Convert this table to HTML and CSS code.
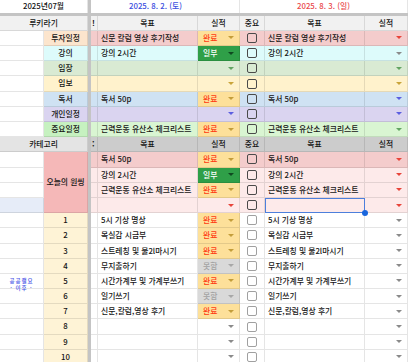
FILE: index.html
```html
<!DOCTYPE html>
<html lang="ko">
<head>
<meta charset="utf-8">
<title>루키라기 시트</title>
<link rel="stylesheet" href="styles.css">
</head>
<body>
<div class="sheet">
  <div class="vdiv"></div>
  <div class="hband"></div>

  <!-- row 1: dates -->
  <div class="c ctr top ab">2025년07월</div>
  <div class="c ctr top d1">2025. 8. 2. (토)</div>
  <div class="c ctr top d2">2025. 8. 3. (일)</div>

  <!-- header row -->
  <div class="c ctr h1 hr ab">루키라기</div>
  <div class="c h1 hr cut">!</div>
  <div class="c ctr h1 hr">목표</div>
  <div class="c ctr h1 hr">실적</div>
  <div class="c ctr h1 hr">중요</div>
  <div class="c ctr h1 hr">목표</div>
  <div class="c ctr h1 hr">실적</div>

  <!-- k0 투자일정 -->
  <div class="c colA"></div>
  <div class="c ctr pe">투자일정</div>
  <div class="c pk"></div>
  <div class="c pk">신문 칼럼 영상 후기작성</div>
  <div class="c dd ok">완료<i class="ar"></i></div>
  <div class="c cbx pk"><span class="cb"></span></div>
  <div class="c pk">신문 칼럼 영상 후기작성</div>
  <div class="c dd pk"><i class="ar a-r"></i></div>

  <!-- k1 강의 -->
  <div class="c colA"></div>
  <div class="c ctr cy">강의</div>
  <div class="c cy"></div>
  <div class="c cy">강의 2시간</div>
  <div class="c dd pt">일부<i class="ar"></i></div>
  <div class="c cbx cy"><span class="cb"></span></div>
  <div class="c cy">강의 2시간</div>
  <div class="c dd cy"><i class="ar a-k"></i></div>

  <!-- k2 임장 -->
  <div class="c colA"></div>
  <div class="c ctr gr">임장</div>
  <div class="c gr"></div>
  <div class="c gr"></div>
  <div class="c dd gr"><i class="ar a-g"></i></div>
  <div class="c cbx gr"><span class="cb"></span></div>
  <div class="c gr"></div>
  <div class="c dd gr"><i class="ar a-g"></i></div>

  <!-- k3 임보 -->
  <div class="c colA"></div>
  <div class="c ctr ye">임보</div>
  <div class="c ye"></div>
  <div class="c ye"></div>
  <div class="c dd ye"><i class="ar a-y"></i></div>
  <div class="c cbx ye"><span class="cb"></span></div>
  <div class="c ye"></div>
  <div class="c dd ye"><i class="ar a-y"></i></div>

  <!-- k4 독서 -->
  <div class="c colA"></div>
  <div class="c ctr bl">독서</div>
  <div class="c bl"></div>
  <div class="c bl">독서 50p</div>
  <div class="c dd ok">완료<i class="ar"></i></div>
  <div class="c cbx bl"><span class="cb"></span></div>
  <div class="c bl">독서 50p</div>
  <div class="c dd bl"><i class="ar a-b"></i></div>

  <!-- k5 개인일정 -->
  <div class="c colA"></div>
  <div class="c ctr pu">개인일정</div>
  <div class="c pu"></div>
  <div class="c pu"></div>
  <div class="c dd pu"><i class="ar a-b"></i></div>
  <div class="c cbx pu"><span class="cb"></span></div>
  <div class="c pu"></div>
  <div class="c dd pu"><i class="ar a-b"></i></div>

  <!-- k6 중요일정 -->
  <div class="c colA"></div>
  <div class="c ctr lg2">중요일정</div>
  <div class="c lg"></div>
  <div class="c lg">근력운동 유산소 체크리스트</div>
  <div class="c dd ok">완료<i class="ar"></i></div>
  <div class="c cbx lg"><span class="cb"></span></div>
  <div class="c lg">근력운동 유산소 체크리스트</div>
  <div class="c dd lg"><i class="ar a-g"></i></div>

  <!-- k7 카테고리 header -->
  <div class="c ctr h2a ab">카테고리</div>
  <div class="c h2 cut">:</div>
  <div class="c ctr h2">목표</div>
  <div class="c ctr h2">실적</div>
  <div class="c ctr h2">중요</div>
  <div class="c ctr h2">목표</div>
  <div class="c ctr h2">실적</div>

  <!-- k8 -->
  <div class="c colA"></div>
  <div class="c rp one">오늘의 원씽</div>
  <div class="c pk"></div>
  <div class="c pk">독서 50p</div>
  <div class="c dd ok">완료<i class="ar"></i></div>
  <div class="c cbx pk"><span class="cb"></span></div>
  <div class="c pk">독서 50p</div>
  <div class="c dd pk"><i class="ar a-r"></i></div>

  <!-- k9 -->
  <div class="c colA"></div>
  <div class="c lp"></div>
  <div class="c lp">강의 2시간</div>
  <div class="c dd pt">일부<i class="ar"></i></div>
  <div class="c cbx lp"><span class="cb"></span></div>
  <div class="c lp">강의 2시간</div>
  <div class="c dd lp"><i class="ar a-r"></i></div>

  <!-- k10 -->
  <div class="c colA"></div>
  <div class="c lp"></div>
  <div class="c lp">근력운동 유산소 체크리스트</div>
  <div class="c dd ok">완료<i class="ar"></i></div>
  <div class="c cbx lp"><span class="cb"></span></div>
  <div class="c lp">근력운동 유산소 체크리스트</div>
  <div class="c dd lp"><i class="ar a-r"></i></div>

  <!-- k11 -->
  <div class="c colA sb"></div>
  <div class="c lp"></div>
  <div class="c lp"></div>
  <div class="c dd lp"><i class="ar a-r"></i></div>
  <div class="c cbx lp"><span class="cb"></span></div>
  <div class="c lp sel"></div>
  <div class="c dd lp"><i class="ar a-r"></i></div>

  <!-- k12 -->
  <div class="c colA"></div>
  <div class="c ctr ny">1</div>
  <div class="c"></div>
  <div class="c">5시 기상 명상</div>
  <div class="c dd ok">완료<i class="ar"></i></div>
  <div class="c cbx"><span class="cb lt"></span></div>
  <div class="c">5시 기상 명상</div>
  <div class="c dd"><i class="ar a-k"></i></div>

  <!-- k13 -->
  <div class="c colA"></div>
  <div class="c ctr ny">2</div>
  <div class="c"></div>
  <div class="c">목실감 시금부</div>
  <div class="c dd ok">완료<i class="ar"></i></div>
  <div class="c cbx"><span class="cb lt"></span></div>
  <div class="c">목실감 시금부</div>
  <div class="c dd"><i class="ar a-k"></i></div>

  <!-- k14 -->
  <div class="c colA"></div>
  <div class="c ctr ny">3</div>
  <div class="c"></div>
  <div class="c">스트레칭 및 물2l마시기</div>
  <div class="c dd ok">완료<i class="ar"></i></div>
  <div class="c cbx"><span class="cb lt"></span></div>
  <div class="c">스트레칭 및 물2l마시기</div>
  <div class="c dd"><i class="ar a-k"></i></div>

  <!-- k15 -->
  <div class="c colA"></div>
  <div class="c ctr ny">4</div>
  <div class="c"></div>
  <div class="c">무지출하기</div>
  <div class="c dd no">못함<i class="ar"></i></div>
  <div class="c cbx"><span class="cb lt"></span></div>
  <div class="c">무지출하기</div>
  <div class="c dd"><i class="ar a-k"></i></div>

  <!-- k16 -->
  <div class="c colA note">공공캘요<br>· 이후 ·</div>
  <div class="c ctr ny">5</div>
  <div class="c"></div>
  <div class="c">시간가계부 및 가계부쓰기</div>
  <div class="c dd ok">완료<i class="ar"></i></div>
  <div class="c cbx"><span class="cb lt"></span></div>
  <div class="c">시간가계부 및 가계부쓰기</div>
  <div class="c dd"><i class="ar a-k"></i></div>

  <!-- k17 -->
  <div class="c colA"></div>
  <div class="c ctr ny">6</div>
  <div class="c"></div>
  <div class="c">일기쓰기</div>
  <div class="c dd no">못함<i class="ar"></i></div>
  <div class="c cbx"><span class="cb lt"></span></div>
  <div class="c">일기쓰기</div>
  <div class="c dd"><i class="ar a-k"></i></div>

  <!-- k18 -->
  <div class="c colA"></div>
  <div class="c ctr ny">7</div>
  <div class="c"></div>
  <div class="c">신문,칼럼,영상 후기</div>
  <div class="c dd ok">완료<i class="ar"></i></div>
  <div class="c cbx"><span class="cb lt"></span></div>
  <div class="c">신문,칼럼,영상 후기</div>
  <div class="c dd"><i class="ar a-k"></i></div>

  <!-- k19 -->
  <div class="c colA"></div>
  <div class="c ctr ny">8</div>
  <div class="c"></div>
  <div class="c"></div>
  <div class="c dd"><i class="ar a-k"></i></div>
  <div class="c cbx"><span class="cb lt"></span></div>
  <div class="c"></div>
  <div class="c dd"><i class="ar a-k"></i></div>

  <!-- k20 -->
  <div class="c colA"></div>
  <div class="c ctr ny">9</div>
  <div class="c"></div>
  <div class="c"></div>
  <div class="c dd"><i class="ar a-k"></i></div>
  <div class="c cbx"><span class="cb lt"></span></div>
  <div class="c"></div>
  <div class="c dd"><i class="ar a-k"></i></div>

  <!-- k21 -->
  <div class="c colA"></div>
  <div class="c ctr ny">10</div>
  <div class="c"></div>
  <div class="c"></div>
  <div class="c dd"><i class="ar a-k"></i></div>
  <div class="c cbx"><span class="cb lt"></span></div>
  <div class="c"></div>
  <div class="c dd"><i class="ar a-k"></i></div>
</div>
</body>
</html>
```

FILE: styles.css
```css
html, body {
  margin: 0;
  padding: 0;
  background: #fff;
}
body {
  width: 408px;
  height: 362px;
  overflow: hidden;
  font-family: "Noto Sans CJK KR", "Noto Sans", sans-serif;
  font-size: 7.8px;
  font-weight: 500;
  color: #141414;
}
.sheet {
  width: 408px;
  display: grid;
  grid-template-columns: 44px 44px 3px 7px 100px 42px 25px 100px 43px;
  grid-template-rows: 12.5px 3px 15.4px repeat(22, 15.2px);
}
.vdiv {
  grid-column: 3 / 4;
  grid-row: 1 / 26;
  background: #c4c4c4;
}
.hband {
  grid-column: 1 / 10;
  grid-row: 2 / 3;
  background: #c4c4c4;
}
.c {
  box-sizing: border-box;
  border-right: 1px solid rgba(0, 0, 0, 0.1);
  border-bottom: 1px solid rgba(0, 0, 0, 0.1);
  display: block;
  padding: 0 3px;
  overflow: hidden;
  white-space: nowrap;
  line-height: 14.2px;
  min-width: 0;
  text-align: left;
}
.ctr { text-align: center; padding: 0; }
.colA { grid-column: 1 / 2; }
.ab { grid-column: 1 / 3; }
.top { border-bottom: none; line-height: 12.5px; }
.hr { line-height: 14.4px; }
.d1 { grid-column: 4 / 7; color: #3b4ee0; padding-right: 19px; }
.d2 { grid-column: 7 / 10; color: #ea4a4c; }

.cut { padding: 0 0 0 1px; font-weight: 700; }

.h1 { background: #f1f1f1; }
.h2 { background: #cccccc; }
.h2a { background: #e4e4e4; }

.pe { background: #fce5cd; }
.pk { background: #f4cccc; }
.cy { background: #ddfbfb; }
.gr { background: #d9ead3; }
.ye { background: #fff2cc; }
.bl { background: #cfe2f3; }
.pu { background: #dad4f0; }
.lg { background: #d9f5d2; }
.lg2 { background: #c6f1c0; }
.lp { background: #fdeaea; }
.rp { background: #f5b8b8; }
.one {
  grid-column: 2 / 3;
  grid-row: span 4;
  display: flex;
  align-items: center;
  justify-content: center;
  padding: 0;
}
.ny { background: #fef3d6; }
.sb { background: #e6ecf8; }

.dd {
  display: flex;
  align-items: center;
  padding: 0 5px;
}
.ar {
  flex: none;
  margin-left: auto;
  width: 0;
  height: 0;
  border-left: 3px solid transparent;
  border-right: 3px solid transparent;
  border-top: 3.5px solid #8a8a8a;
}
.a-r { border-top-color: #e8443a; }
.a-g { border-top-color: #62a462; }
.a-y { border-top-color: #c9a43a; }
.a-b { border-top-color: #5b5ee0; }
.a-k { border-top-color: #8a8a8a; }

.ok { background: #fde09a; color: #ff3a12; }
.ok .ar { border-top-color: #c49d3a; }
.pt { background: #2f9f48; color: #fff; }
.pt .ar { border-top-color: #0f4a20; }
.no { background: #d9d9d9; color: #a2a2a2; }
.no .ar { border-top-color: #a8a8a8; }

.cbx {
  display: flex;
  align-items: center;
  justify-content: center;
  padding: 0;
}
.cb {
  box-sizing: border-box;
  width: 10px;
  height: 10px;
  border: 1.5px solid #4a4a4a;
  border-radius: 2px;
}
.cb.lt { border: 1px solid #a0a0a0; }

.sel {
  position: relative;
  overflow: visible;
  outline: 1px solid #4d7fdc;
  outline-offset: -1px;
  z-index: 1;
}
.sel::after {
  content: "";
  position: absolute;
  right: -4px;
  bottom: -4px;
  width: 6px;
  height: 6px;
  border-radius: 50%;
  background: #1a66dd;
}

.note {
  overflow: visible;
  padding: 4px 0 0;
  font-size: 5.5px;
  line-height: 7px;
  letter-spacing: 1px;
  color: #3f50e6;
  text-align: center;
}
```
